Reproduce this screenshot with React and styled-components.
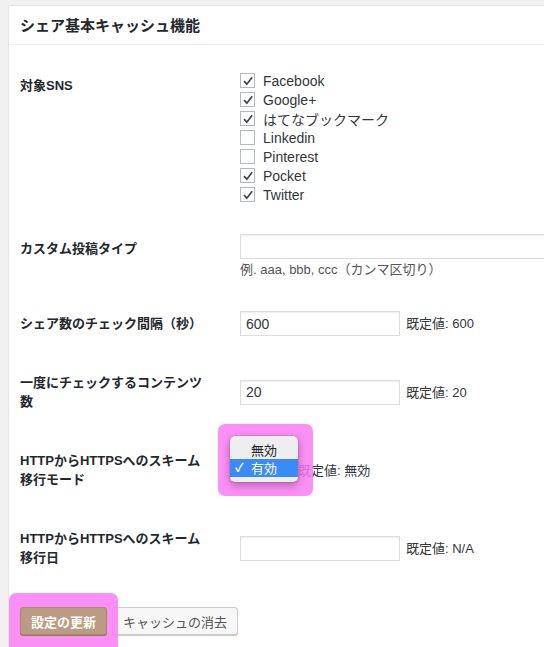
import React from 'react'
import styled, { createGlobalStyle } from 'styled-components'

const GlobalStyle = createGlobalStyle`
  html, body {
    margin: 0;
    padding: 0;
    background: #f1f1f1;
    overflow: hidden;
  }
  body {
    font-family: "Liberation Sans", "Noto Sans CJK JP", sans-serif;
    color: #23282d;
  }
`

const Page = styled.div`
  box-sizing: border-box;
  height: 647px;
  padding: 5px 0 0 8px;
  overflow: hidden;
`

const Card = styled.div`
  width: 640px;
  background: #fff;
  border: 1px solid #e5e5e5;
  box-shadow: 0 1px 1px rgba(0, 0, 0, 0.04);
`

const Header = styled.div`
  height: 38px;
  display: flex;
  align-items: center;
  padding: 0 11px;
  border-bottom: 1px solid #eee;
`

const Title = styled.h2`
  margin: 0;
  font-size: 15px;
  font-weight: bold;
  line-height: 1;
`

const Body = styled.div`
  padding: 11px 11px 0;
`

const Row = styled.div`
  display: flex;
  align-items: flex-start;
`

const Label = styled.div`
  flex-shrink: 0;
  width: 190px;
  padding: 20px 30px 20px 0;
  font-size: 13px;
  font-weight: bold;
  line-height: 19px;
`

const Field = styled.div`
  align-self: center;
  display: flex;
  flex-direction: column;
  padding: 15px 0;
  font-size: 13px;
  color: #32373c;
`

const CheckItem = styled.label`
  display: flex;
  align-items: center;
  gap: 8px;
  height: 19px;
  font-size: 14px;
  color: #32373c;
`

const Box = styled.span`
  box-sizing: border-box;
  width: 15px;
  height: 15px;
  border: 1px solid #b4b9be;
  background: #fff;
  display: flex;
  align-items: center;
  justify-content: center;
`

const Input = styled.input`
  box-sizing: border-box;
  width: ${p => (p.$wide ? '340px' : '160px')};
  height: 25px;
  margin: 0;
  padding: 0 5px;
  border: 1px solid #ddd;
  border-radius: 0;
  box-shadow: inset 0 1px 2px rgba(0, 0, 0, 0.07);
  font-family: "Liberation Sans", "Noto Sans CJK JP", sans-serif;
  font-size: 14px;
  color: #32373c;
  outline: none;
`

const Desc = styled.div`
  margin-top: 1px;
  line-height: 19px;
  color: #555;
`

const Line = styled.div`
  display: flex;
  align-items: center;
  gap: 6px;
  line-height: 19px;
`

const SelectWrap = styled.div`
  position: relative;
`

const SelectBox = styled.div`
  box-sizing: border-box;
  width: 52px;
  height: 22px;
  border: 1px solid #ddd;
  padding: 0 5px;
  line-height: 20px;
`

const Highlight = styled.div`
  position: absolute;
  left: ${p => p.$left}px;
  top: ${p => p.$top}px;
  width: ${p => p.$w}px;
  height: ${p => p.$h}px;
  border-radius: 7px;
  background: rgba(249, 123, 243, 0.85);
  z-index: 1;
  pointer-events: none;
`

const Popup = styled.div`
  position: absolute;
  left: -10px;
  top: -23px;
  width: 68px;
  padding: 5px 0;
  border-radius: 5px;
  background: #eeeeee;
  box-shadow: 0 3px 8px rgba(0, 0, 0, 0.3), 0 0 0 1px rgba(0, 0, 0, 0.08);
  z-index: 2;
`

const Option = styled.div`
  display: flex;
  align-items: center;
  height: 18px;
  padding-left: 5px;
  font-size: 13px;
  color: ${p => (p.$active ? '#fff' : '#222')};
  background: ${p => (p.$active ? '#3b8bf6' : 'transparent')};
`

const Tick = styled.span`
  width: 16px;
  flex-shrink: 0;
  font-size: 12px;
  font-weight: bold;
  line-height: 18px;
`

const Submit = styled.div`
  display: flex;
  gap: 5px;
  padding: 20px 0 20px;
`

const ButtonWrap = styled.div`
  position: relative;
`

const Button = styled.button`
  position: relative;
  box-sizing: border-box;
  height: 28px;
  margin: 0;
  padding: 0 10px;
  border-radius: 3px;
  font-family: "Liberation Sans", "Noto Sans CJK JP", sans-serif;
  font-size: 13px;
  cursor: pointer;
`

const PrimaryButton = styled(Button)`
  z-index: 2;
  background: #bc9b83;
  border: 1px solid #a98770;
  box-shadow: 0 1px 0 #987761;
  color: #fff;
  font-weight: bold;
`

const SecondaryButton = styled(Button)`
  background: #f7f7f7;
  border: 1px solid #ccc;
  box-shadow: 0 1px 0 #ccc;
  color: #555;
`

const sns = [
  { name: 'Facebook', on: true },
  { name: 'Google+', on: true },
  { name: 'はてなブックマーク', on: true },
  { name: 'Linkedin', on: false },
  { name: 'Pinterest', on: false },
  { name: 'Pocket', on: true },
  { name: 'Twitter', on: true },
]

const Check = ({ on }) => (
  <Box>
    {on && (
      <svg width="12" height="12" viewBox="0 0 12 12">
        <path d="M2 6.2 L4.8 9.2 L10.2 2.2" fill="none" stroke="#444" strokeWidth="1.7" />
      </svg>
    )}
  </Box>
)

export default function App() {
  return (
    <Page>
      <GlobalStyle />
      <Card>
        <Header>
          <Title>シェア基本キャッシュ機能</Title>
        </Header>
        <Body>
          <Row>
            <Label>対象SNS</Label>
            <Field>
              {sns.map(s => (
                <CheckItem key={s.name}>
                  <Check on={s.on} />
                  {s.name}
                </CheckItem>
              ))}
            </Field>
          </Row>
          <Row>
            <Label>カスタム投稿タイプ</Label>
            <Field>
              <Input $wide defaultValue="" />
              <Desc>例. aaa, bbb, ccc（カンマ区切り）</Desc>
            </Field>
          </Row>
          <Row>
            <Label>シェア数のチェック間隔（秒）</Label>
            <Field>
              <Line>
                <Input defaultValue="600" />
                既定値: 600
              </Line>
            </Field>
          </Row>
          <Row>
            <Label>一度にチェックするコンテンツ数</Label>
            <Field>
              <Line>
                <Input defaultValue="20" />
                既定値: 20
              </Line>
            </Field>
          </Row>
          <Row>
            <Label>HTTPからHTTPSへのスキーム移行モード</Label>
            <Field>
              <Line>
                <SelectWrap>
                  <SelectBox />
                  <Highlight $left={-22} $top={-35} $w={95} $h={72} />
                  <Popup>
                    <Option>
                      <Tick />無効
                    </Option>
                    <Option $active>
                      <Tick>✓</Tick>有効
                    </Option>
                  </Popup>
                </SelectWrap>
                既定値: 無効
              </Line>
            </Field>
          </Row>
          <Row>
            <Label>HTTPからHTTPSへのスキーム移行日</Label>
            <Field>
              <Line>
                <Input defaultValue="" />
                既定値: N/A
              </Line>
            </Field>
          </Row>
          <Submit>
            <ButtonWrap>
              <Highlight $left={-11} $top={-14} $w={109} $h={62} />
              <PrimaryButton>設定の更新</PrimaryButton>
            </ButtonWrap>
            <SecondaryButton>キャッシュの消去</SecondaryButton>
          </Submit>
        </Body>
      </Card>
    </Page>
  )
}
